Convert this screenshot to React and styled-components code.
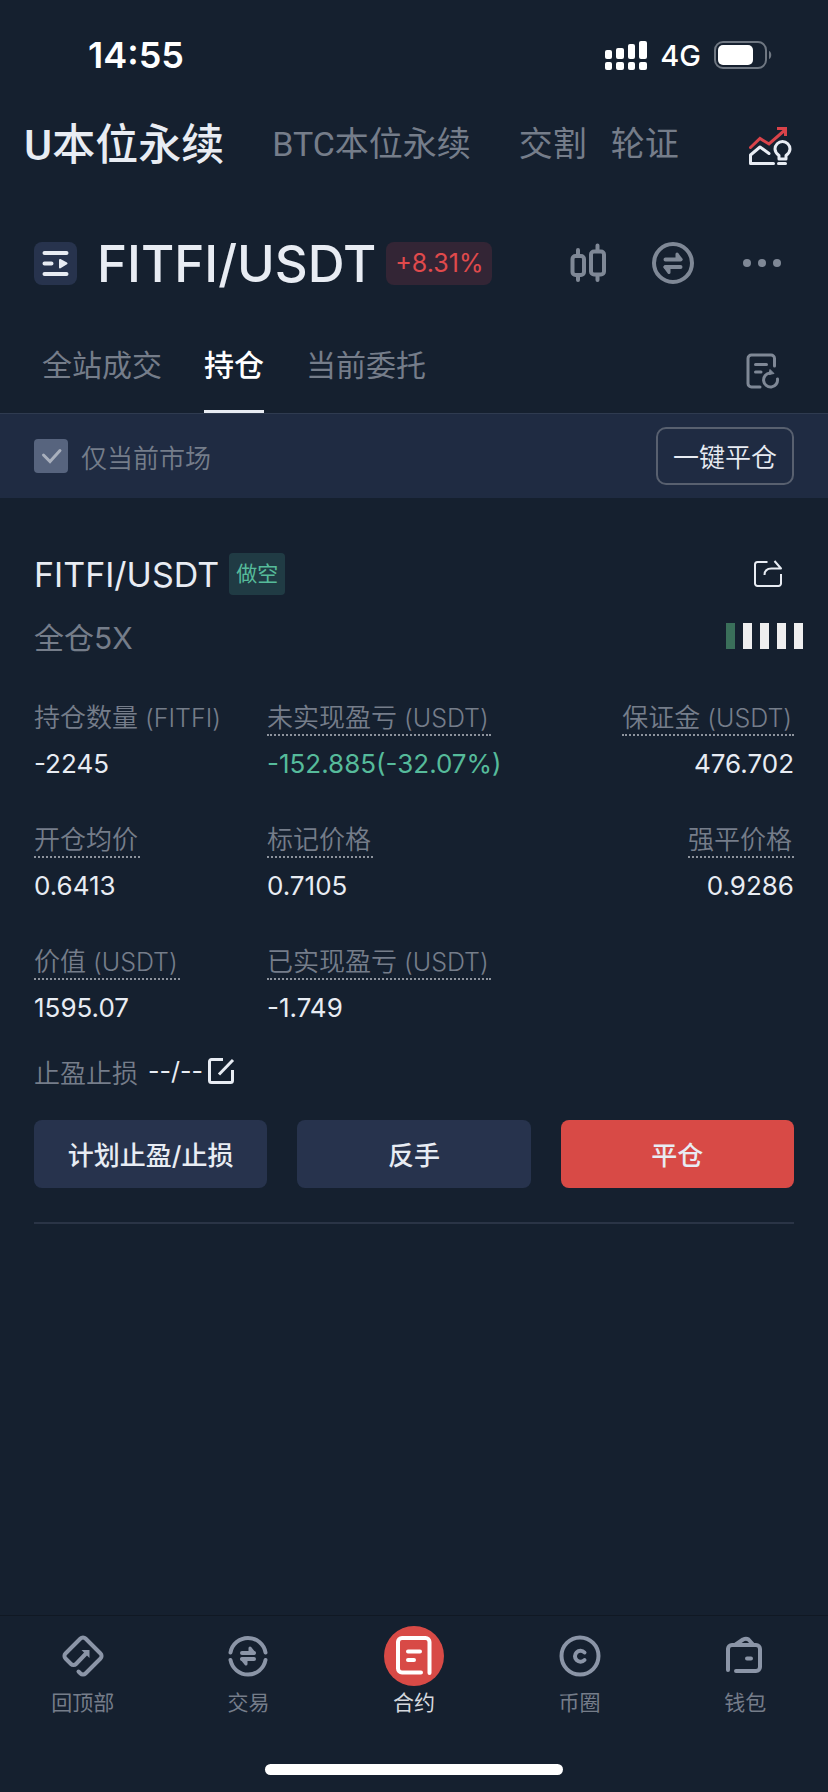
import React from "react";
import styled, { createGlobalStyle } from "styled-components";

const marketTabs = [
  { name: "U本位永续", active: true },
  { name: "BTC本位永续" },
];

const shortTabs = [{ name: "交割" }, { name: "轮证" }];

const orderTabs = [
  { name: "全站成交" },
  { name: "持仓", active: true },
  { name: "当前委托" },
];

const stats = [
  { label: "持仓数量", unit: "FITFI", value: "-2245", plain: true },
  {
    label: "未实现盈亏",
    unit: "USDT",
    value: "-152.885(-32.07%)",
    tone: "green",
  },
  { label: "保证金", unit: "USDT", value: "476.702", end: true },
  { label: "开仓均价", value: "0.6413" },
  { label: "标记价格", value: "0.7105" },
  { label: "强平价格", value: "0.9286", end: true },
  { label: "价值", unit: "USDT", value: "1595.07" },
  { label: "已实现盈亏", unit: "USDT", value: "-1.749" },
];

const riskLevels = [true, false, false, false, false];

const navItems = [
  { name: "回顶部", Icon: TopIcon },
  { name: "交易", Icon: TradeIcon },
  { name: "合约", Icon: ContractIcon, active: true },
  { name: "币圈", Icon: CoinIcon },
  { name: "钱包", Icon: WalletIcon },
];

function App() {
  return (
    <>
      <GlobalStyle />
      <Page>
        <StatusBar />
        <MarketBar>
          {marketTabs.map(({ name, active }) => (
            <MarketTab key={name} type="button" $active={active}>
              {name}
            </MarketTab>
          ))}
          <ShortTabs>
            {shortTabs.map(({ name }) => (
              <MarketTab key={name} type="button">
                {name}
              </MarketTab>
            ))}
          </ShortTabs>
          <IconButton type="button" aria-label="行情分析">
            <TrendIcon />
          </IconButton>
        </MarketBar>

        <PairBar>
          <MenuButton type="button" aria-label="切换交易对">
            <MenuIcon />
          </MenuButton>
          <PairName>FITFI/USDT</PairName>
          <Change>+8.31%</Change>
          <PairTools>
            <IconButton type="button" aria-label="K线">
              <CandleIcon />
            </IconButton>
            <IconButton type="button" aria-label="划转">
              <SwapIcon />
            </IconButton>
            <IconButton type="button" aria-label="更多">
              <MoreIcon />
            </IconButton>
          </PairTools>
        </PairBar>

        <OrderBar>
          {orderTabs.map(({ name, active }) => (
            <OrderTab key={name} type="button" $active={active}>
              {name}
            </OrderTab>
          ))}
          <IconButton type="button" aria-label="历史记录">
            <HistoryIcon />
          </IconButton>
        </OrderBar>

        <FilterBar>
          <CheckLabel>
            <CheckBox>
              <input type="checkbox" defaultChecked />
              <svg width="34" height="34" viewBox="0 0 34 34" fill="none">
                <path
                  d="M9.500 16l6.500 6.500 10-11"
                  stroke="#a9b0bd"
                  strokeWidth="3"
                  strokeLinecap="round"
                />
              </svg>
            </CheckBox>
            仅当前市场
          </CheckLabel>
          <CloseAll type="button">一键平仓</CloseAll>
        </FilterBar>

        <Position>
          <PositionHead>
            <h2>FITFI/USDT</h2>
            <Side>做空</Side>
            <IconButton type="button" aria-label="分享">
              <ShareIcon />
            </IconButton>
          </PositionHead>
          <MarginRow>
            <span>全仓5X</span>
            <Risk>
              {riskLevels.map((on, i) => (
                <RiskBar key={i} $on={on} />
              ))}
            </Risk>
          </MarginRow>
          <Stats>
            {stats.map(({ label, unit, value, plain, tone, end }) => (
              <Stat key={label} $end={end}>
                <StatLabel $plain={plain}>
                  {label}
                  {unit && <small> ({unit})</small>}
                </StatLabel>
                <StatValue $tone={tone}>{value}</StatValue>
              </Stat>
            ))}
          </Stats>
          <StopRow>
            <span>止盈止损</span>
            <b>--/--</b>
            <IconButton type="button" aria-label="编辑止盈止损">
              <EditIcon />
            </IconButton>
          </StopRow>
          <Actions>
            <ActionButton type="button">计划止盈/止损</ActionButton>
            <ActionButton type="button">反手</ActionButton>
            <ActionButton type="button" $danger>
              平仓
            </ActionButton>
          </Actions>
        </Position>

        <BottomNav>
          <NavList>
            {navItems.map(({ name, Icon, active }) => (
              <NavLink key={name} href="#" $active={active}>
                <NavIcon $active={active}>
                  <Icon />
                </NavIcon>
                {name}
              </NavLink>
            ))}
          </NavList>
          <HomeIndicator />
        </BottomNav>
      </Page>
    </>
  );
}
export default App;

function StatusBar() {
  return (
    <Status>
      <Clock>14:55</Clock>
      <Signals>
        <svg width="42" height="30" viewBox="0 0 42 30" fill="#fff">
          <rect x="0" y="10" width="7" height="9" rx="2" />
          <rect x="11" y="8" width="8" height="11" rx="2" />
          <rect x="23" y="4" width="7" height="15" rx="2" />
          <rect x="34" y="1" width="8" height="18" rx="2" />
          <rect x="0" y="22" width="7" height="8" rx="2" />
          <rect x="11" y="22" width="8" height="8" rx="2" />
          <rect x="23" y="22" width="7" height="8" rx="2" />
          <rect x="34" y="22" width="8" height="8" rx="2" />
        </svg>
        <span>4G</span>
        <svg width="58" height="28" viewBox="0 0 58 28">
          <rect
            x="1"
            y="1"
            width="51"
            height="26"
            rx="8"
            fill="none"
            stroke="#6f7782"
            strokeWidth="2"
          />
          <rect x="4" y="4" width="35" height="20" rx="5" fill="#fff" />
          <path d="M55 10c3 1 3 7 0 8z" fill="#6f7782" />
        </svg>
      </Signals>
    </Status>
  );
}

function TrendIcon() {
  return (
    <svg width="44" height="40" viewBox="0 0 44 40" fill="none" strokeWidth="3">
      <g stroke="#d9434a">
        <path d="M2.500 21.500l9.500-9 9 5.500L37 4" strokeLinecap="round" />
        <path d="M29 2.500h8.500V10" />
      </g>
      <g stroke="#e8ecf3" strokeLinecap="round" strokeLinejoin="round">
        <path d="M25.500 37.500H2.500V29l9.500-8L21 27.500" />
        <path d="M31 33v-3.500c-2-1.500-4-3.500-4-6.500a7.500 7.500 0 0 1 15 0c0 3-2 5-4 6.500V33z" />
        <path d="M30.500 37.500h7" />
      </g>
    </svg>
  );
}

function MenuIcon() {
  return (
    <svg width="43" height="43" viewBox="0 0 43 43" fill="none">
      <path
        d="M10.500 11h22M10.500 21.500h7M10.500 32h22"
        stroke="#e8ecf3"
        strokeWidth="4"
        strokeLinecap="round"
      />
      <path
        d="M26 18v7.500l6.500-4z"
        fill="#e8ecf3"
        stroke="#e8ecf3"
        strokeWidth="2"
        strokeLinejoin="round"
      />
    </svg>
  );
}

function CandleIcon() {
  return (
    <svg width="36" height="40" viewBox="0 0 36 40" fill="none">
      <g stroke="#7f8896" strokeWidth="4" strokeLinecap="round">
        <rect x="2.500" y="13" width="11.500" height="19" rx="3" />
        <rect x="21" y="8.500" width="13" height="23" rx="3" />
        <path d="M8 7v5M8 33v4M27.500 2.500v5M27.500 32v5" />
      </g>
    </svg>
  );
}

function SwapIcon() {
  return (
    <svg width="42" height="42" viewBox="0 0 42 42" fill="none">
      <circle cx="21" cy="21" r="19" stroke="#7f8896" strokeWidth="4" />
      <path
        d="M13.500 17.500h15M13.500 25h15"
        stroke="#7f8896"
        strokeWidth="4"
        strokeLinecap="round"
      />
      <path
        d="M25 12l4 5.500h-4zM17 30.500L13 25h4z"
        fill="#7f8896"
        stroke="#7f8896"
        strokeWidth="3"
        strokeLinejoin="round"
      />
    </svg>
  );
}

function MoreIcon() {
  return (
    <svg width="42" height="10" viewBox="0 0 42 10" fill="#7f8896">
      <circle cx="7" cy="5" r="4" />
      <circle cx="22" cy="5" r="4" />
      <circle cx="37" cy="5" r="4" />
    </svg>
  );
}

function HistoryIcon() {
  return (
    <svg width="34" height="36" viewBox="0 0 34 36" fill="none">
      <g
        stroke="#7f8896"
        strokeWidth="3"
        strokeLinecap="round"
        strokeLinejoin="round"
      >
        <path d="M28.500 13V5.500a3.500 3.500 0 0 0-3.500-3.500H5.500A3.500 3.500 0 0 0 2 5.500v25A3.500 3.500 0 0 0 5.500 34H14" />
        <path d="M9.500 11.500H20.500M9.500 19h5.500" />
        <path d="M31.500 26a7 7 0 1 1-7.500-6" />
      </g>
      <path
        d="M24 16.500l4 4-5 1z"
        fill="#7f8896"
        stroke="#7f8896"
        strokeLinejoin="round"
      />
    </svg>
  );
}

function ShareIcon() {
  return (
    <svg width="30" height="28" viewBox="0 0 30 28" fill="none">
      <g stroke="#e8ecf3" strokeWidth="2" strokeLinejoin="round">
        <path d="M14.500 2H4.500A2.500 2.500 0 0 0 2 4.500v19A2.500 2.500 0 0 0 4.500 26h21a2.500 2.500 0 0 0 2.500-2.500V14" />
        <path d="M11.500 15c0-4 2.500-6.500 7-6.500H28L21.500 1" />
      </g>
    </svg>
  );
}

function EditIcon() {
  return (
    <svg width="28" height="28" viewBox="0 0 28 28" fill="none">
      <g stroke="#e8ecf3" strokeWidth="3" strokeLinejoin="round">
        <path d="M16 2.500H4.500a2 2 0 0 0-2 2v19a2 2 0 0 0 2 2h19a2 2 0 0 0 2-2V13" />
        <path d="M12 17.500L26 3" />
      </g>
    </svg>
  );
}

function TopIcon() {
  return (
    <svg width="44" height="44" viewBox="0 0 44 44" fill="none">
      <path
        d="M26 18.500L15 30a3.500 3.500 0 0 1-5 0L4.500 24.500a3.500 3.500 0 0 1 0-5L19.500 4.500a3.500 3.500 0 0 1 5 0L39.500 19.500a3.500 3.500 0 0 1 0 5L24.500 39.500a3.500 3.500 0 0 1-5 0l-2-2"
        stroke="#8b95a7"
        strokeWidth="4"
        strokeLinecap="round"
        strokeLinejoin="round"
      />
      <path d="M20.500 16h8v8z" fill="#8b95a7" />
    </svg>
  );
}

function TradeIcon() {
  return (
    <svg width="44" height="44" viewBox="0 0 44 44" fill="none">
      <g stroke="#8b95a7" strokeWidth="4" strokeLinecap="round">
        <path d="M4.500 18.500a17.800 17.800 0 0 1 35 0M4.500 26a17.800 17.800 0 0 0 35 0" />
        <path d="M16 19h12M16 25h12" />
      </g>
      <path
        d="M24 14l4 5h-4zM20 30l-4-5h4z"
        fill="#8b95a7"
        stroke="#8b95a7"
        strokeWidth="3"
        strokeLinejoin="round"
      />
    </svg>
  );
}

function ContractIcon() {
  return (
    <svg width="44" height="44" viewBox="0 0 44 44" fill="none">
      <g
        stroke="#fff"
        strokeWidth="4"
        strokeLinecap="round"
        strokeLinejoin="round"
      >
        <path d="M37.500 39V8a4 4 0 0 0-4-4H10a4 4 0 0 0-4 4v26.500a4 4 0 0 0 4 4h19" />
        <path d="M16 17.500h12M16 26h6" />
      </g>
    </svg>
  );
}

function CoinIcon() {
  return (
    <svg width="44" height="44" viewBox="0 0 44 44" fill="none">
      <g stroke="#8b95a7" strokeWidth="4" strokeLinecap="round">
        <circle cx="22" cy="22" r="18.500" />
        <path d="M26.500 18.500a5.500 5.500 0 1 0 0 7.500" />
      </g>
    </svg>
  );
}

function WalletIcon() {
  return (
    <svg width="44" height="44" viewBox="0 0 44 44" fill="none">
      <g
        stroke="#8b95a7"
        strokeWidth="4"
        strokeLinecap="round"
        strokeLinejoin="round"
      >
        <path d="M5 36V15a4 4 0 0 1 4-4h24a4 4 0 0 1 4 4v18a4 4 0 0 1-4 4H13" />
        <path d="M12 11l8-5.500c2-1 4-1 5.500 0L30 10.500" />
        <path d="M24 24.500h4" />
      </g>
    </svg>
  );
}

const GlobalStyle = createGlobalStyle`
  * {
    box-sizing: border-box;
    margin: 0;
    padding: 0;
  }
  body {
    background: #15202f;
    color: #e8ecf3;
    font-family: Inter, "Noto Sans CJK SC", sans-serif;
  }
  button {
    border: none;
    background: none;
    color: inherit;
    font-family: inherit;
    cursor: pointer;
  }
  svg {
    display: block;
  }
`;

const Page = styled.main`
  display: flex;
  flex-direction: column;
  min-height: 100vh;
`;

const Status = styled.header`
  display: flex;
  align-items: center;
  justify-content: space-between;
  height: 96px;
  padding: 14px 56px 0 88px;
  color: #fff;
`;

const Clock = styled.time`
  font-size: 36px;
  font-weight: 600;
`;

const Signals = styled.div`
  display: flex;
  align-items: center;
  gap: 13px;
  font-size: 29px;
  font-weight: 500;
`;

const IconButton = styled.button`
  flex: none;
`;

const MarketBar = styled.nav`
  display: flex;
  align-items: center;
  gap: 48px;
  height: 96px;
  padding: 0 36px 0 24px;

  & > ${IconButton} {
    margin-left: auto;
    padding-top: 4px;
  }
`;

const MarketTab = styled.button`
  padding-bottom: 6px;
  font-family: Roboto, "Noto Sans CJK SC", sans-serif;
  font-size: ${(props) => (props.$active ? "43px" : "34px")};
  font-weight: ${(props) => (props.$active ? 500 : 400)};
  white-space: nowrap;
  color: ${(props) => (props.$active ? "#e8ecf3" : "#757d8a")};
`;

const ShortTabs = styled.div`
  display: flex;
  gap: 24px;
`;

const PairBar = styled.section`
  display: flex;
  align-items: center;
  height: 144px;
  padding: 0 46px 2px 34px;
`;

const MenuButton = styled.button`
  border-radius: 8px;
  background: #27334d;
`;

const PairName = styled.h1`
  margin-left: 20px;
  font-size: 51px;
  font-weight: 500;
`;

const Change = styled.span`
  margin-left: 10px;
  padding: 0 9px;
  border-radius: 8px;
  background: #332535;
  color: #e04a4c;
  font-size: 25px;
  line-height: 43px;
`;

const PairTools = styled.div`
  display: flex;
  align-items: center;
  gap: 46px;
  margin-left: auto;
`;

const OrderBar = styled.nav`
  display: flex;
  align-items: stretch;
  gap: 42px;
  height: 78px;
  padding: 0 48px 0 42px;
  border-bottom: 1px solid #2f3b50;

  & > ${IconButton} {
    margin-left: auto;
    padding-bottom: 8px;
  }
`;

const OrderTab = styled.button`
  padding-bottom: 20px;
  border-bottom: 3px solid
    ${(props) => (props.$active ? "#e8ecf3" : "transparent")};
  color: ${(props) => (props.$active ? "#fff" : "#757d8a")};
  font-size: 30px;
  font-weight: ${(props) => (props.$active ? 500 : 400)};
  white-space: nowrap;
`;

const FilterBar = styled.section`
  display: flex;
  align-items: center;
  justify-content: space-between;
  height: 84px;
  padding: 0 34px;
  background: #1f2b42;
`;

const CheckLabel = styled.label`
  display: flex;
  align-items: center;
  gap: 13px;
  color: #757d8a;
  font-size: 26px;
  font-weight: 350;
`;

const CheckBox = styled.span`
  display: grid;

  input,
  svg {
    grid-area: 1 / 1;
    width: 34px;
    height: 34px;
  }
  input {
    appearance: none;
    border-radius: 4px;
    background: #57647e;
  }
  svg {
    visibility: hidden;
    pointer-events: none;
  }
  input:checked + svg {
    visibility: visible;
  }
`;

const CloseAll = styled.button`
  height: 58px;
  padding: 0 15px 2px;
  border: 2px solid #58606f;
  border-radius: 10px;
  font-size: 26px;
  font-weight: 350;
`;

const Position = styled.section`
  margin: 0 34px;
  padding-top: 48px;
  padding-bottom: 34px;
  border-bottom: 2px solid #2a3446;
`;

const PositionHead = styled.div`
  display: flex;
  align-items: center;
  height: 56px;

  h2 {
    font-size: 34px;
    font-weight: 400;
  }
  & > ${IconButton} {
    margin-left: auto;
    padding-right: 11px;
  }
`;

const Side = styled.span`
  margin-left: 10px;
  padding: 0 7px;
  border-radius: 4px;
  background: #203b44;
  color: #56bb9b;
  font-size: 21px;
  line-height: 42px;
`;

const MarginRow = styled.div`
  display: flex;
  align-items: center;
  justify-content: space-between;
  height: 68px;
  color: #757d8a;
  font-size: 30px;
`;

const Risk = styled.div`
  display: flex;
  gap: 8px;
  margin-right: -9px;
`;

const RiskBar = styled.i`
  width: 9px;
  height: 26px;
  background: ${(props) => (props.$on ? "#3a6f5a" : "#eeeeef")};
`;

const Stats = styled.dl`
  display: grid;
  grid-template-columns: 233px 1fr auto;
  row-gap: 38px;
  padding-top: 30px;
`;

const Stat = styled.div`
  display: flex;
  flex-direction: column;
  align-items: ${(props) => (props.$end ? "flex-end" : "flex-start")};
  gap: 8px;
`;

const StatLabel = styled.dt`
  height: 36px;
  padding: 2px 2px 0 0;
  border-bottom: 2px dotted
    ${(props) => (props.$plain ? "transparent" : "#8d939d")};
  color: #757d8a;
  font-size: 26px;
  font-weight: 350;
  line-height: 32px;
  white-space: nowrap;

  small {
    font-size: 25px;
  }
`;

const StatValue = styled.dd`
  color: ${(props) => (props.$tone === "green" ? "#56bb9b" : "#e8ecf3")};
  font-size: 26px;
  line-height: 40px;
`;

const StopRow = styled.div`
  display: flex;
  align-items: center;
  height: 50px;
  margin-top: 18px;
  color: #757d8a;
  font-size: 26px;
  font-weight: 350;

  b {
    margin: 0 4px 0 10px;
    color: #e8ecf3;
    font-size: 25px;
    font-weight: 400;
  }
`;

const Actions = styled.div`
  display: grid;
  grid-template-columns: repeat(3, 1fr);
  gap: 30px;
  margin-top: 24px;
`;

const ActionButton = styled.button`
  height: 68px;
  padding-bottom: 2px;
  border-radius: 8px;
  background: ${(props) => (props.$danger ? "#d84a46" : "#27334d")};
  font-size: 26px;
  font-weight: 500;
`;

const BottomNav = styled.footer`
  margin-top: auto;
  border-top: 1px solid #101823;
`;

const NavList = styled.nav`
  display: grid;
  grid-template-columns: repeat(5, 1fr);
  padding-top: 10px;
`;

const NavLink = styled.a`
  display: flex;
  flex-direction: column;
  align-items: center;
  color: ${(props) => (props.$active ? "#d5d8de" : "#757d8a")};
  font-size: 21px;
  line-height: 34px;
  text-decoration: none;
`;

const NavIcon = styled.span`
  display: grid;
  place-items: center;
  width: 60px;
  height: 60px;
  border-radius: 50%;
  background: ${(props) => (props.$active ? "#d84a46" : "none")};
`;

const HomeIndicator = styled.div`
  width: 36%;
  height: 11px;
  margin: 44px auto 17px;
  border-radius: 6px;
  background: #fff;
`;
